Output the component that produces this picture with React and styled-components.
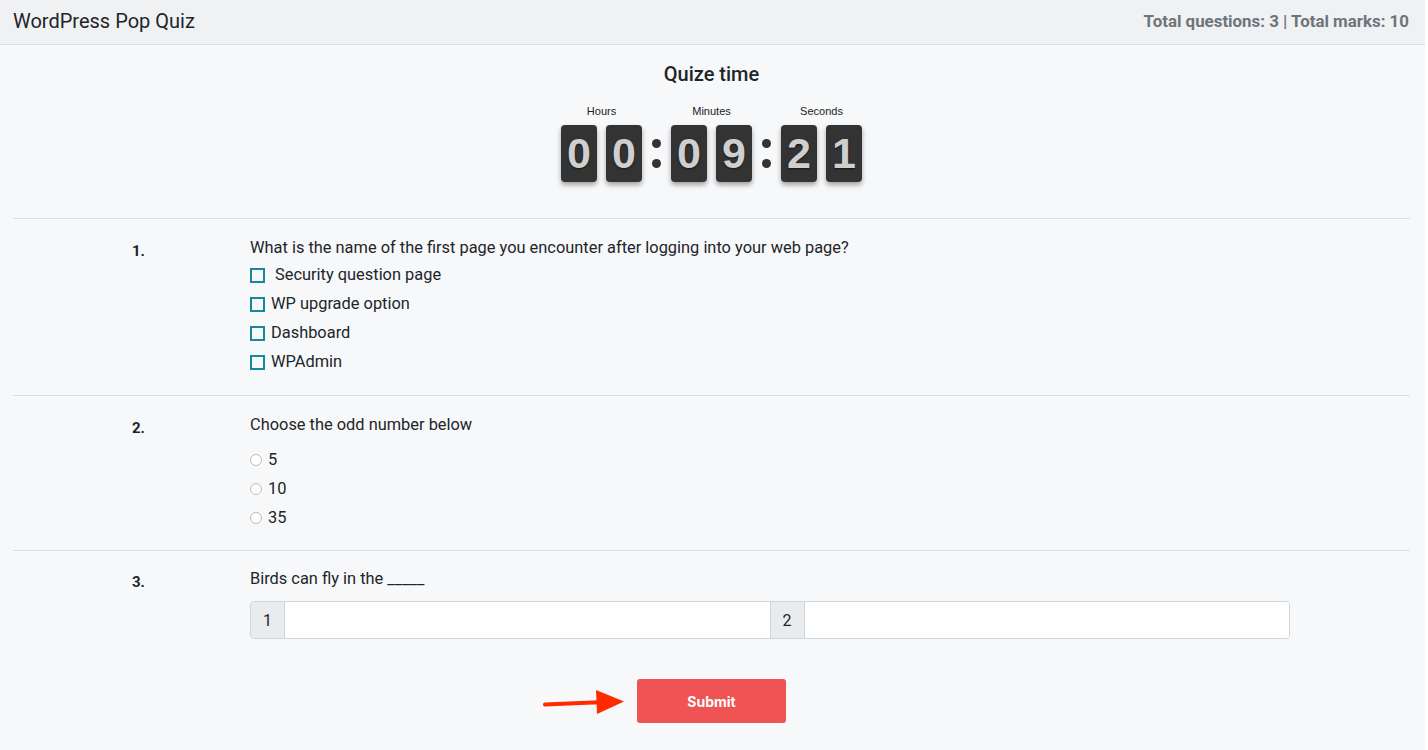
import React from 'react'
import styled, { createGlobalStyle } from 'styled-components'

const GlobalStyle = createGlobalStyle`
  html, body {
    margin: 0;
    padding: 0;
    background: #ffffff;
  }
  body {
    font-family: Roboto, Inter, "Noto Sans", "Liberation Sans", sans-serif;
    color: #212529;
  }
`

const Page = styled.div`
  width: 1425px;
  min-height: 750px;
  background: #f7f8fa;
`

const Header = styled.header`
  height: 45px;
  box-sizing: border-box;
  display: flex;
  align-items: center;
  justify-content: space-between;
  padding: 0 16px 2px 13px;
  background: #f0f1f3;
  border-bottom: 1px solid #dcdee1;
`

const Brand = styled.div`
  font-size: 20px;
  color: #212529;
`

const Totals = styled.div`
  font-size: 16.9px;
  font-weight: 700;
  color: #6c757d;
`

const Main = styled.main`
  padding: 0 15px 0 13px;
`

const TimerBlock = styled.section`
  display: flex;
  flex-direction: column;
  align-items: center;
  padding: 18px 0 36px;
  border-bottom: 1px solid #dcdee1;
`

const TimerTitle = styled.h2`
  margin: 0 0 19px;
  font-size: 20px;
  font-weight: 500;
  line-height: 22px;
  color: #212529;
`

const Clock = styled.div`
  display: flex;
  align-items: flex-end;
`

const Group = styled.div`
  display: flex;
  flex-direction: column;
  align-items: center;
`

const GroupLabel = styled.div`
  font-family: "Liberation Sans", Arial, sans-serif;
  font-size: 11px;
  line-height: 14px;
  color: #222;
  margin-bottom: 7px;
`

const Cards = styled.div`
  display: flex;
  gap: 9px;
`

const Card = styled.div`
  width: 36px;
  height: 57px;
  border-radius: 4px;
  background: #333333;
  display: flex;
  align-items: center;
  justify-content: center;
  box-shadow: 0 3px 5px rgba(0, 0, 0, 0.35);
  font-family: "Liberation Sans", Arial, sans-serif;
  font-weight: 700;
  font-size: 43px;
  color: #cfcfcf;
  text-shadow: 0 1px 2px rgba(0, 0, 0, 0.6);
`

const Colon = styled.div`
  width: 29px;
  height: 57px;
  display: flex;
  flex-direction: column;
  align-items: center;
  justify-content: center;
  gap: 11px;

  &::before,
  &::after {
    content: '';
    width: 9px;
    height: 9px;
    border-radius: 50%;
    background: #333;
  }
`

const Question = styled.section`
  display: grid;
  grid-template-columns: 237px 1040px;
  padding: ${(p) => p.$pad || '17px 0 18px'};
  border-bottom: ${(p) => (p.$last ? 'none' : '1px solid #dcdee1')};
`

const Number = styled.div`
  padding: 3px 0 0 119px;
  font-size: 15px;
  font-weight: 700;
  line-height: 24px;
  color: #212529;
`

const Body = styled.div`
  display: flex;
  flex-direction: column;
`

const Prompt = styled.div`
  font-size: 16.4px;
  line-height: 24px;
  color: #212529;
  margin-bottom: ${(p) => p.$gap || '0'};
`

const Option = styled.label`
  display: flex;
  align-items: center;
  height: 29px;
  font-size: 16.4px;
  color: #212529;
`

const Box = styled.span`
  width: 15px;
  height: 15px;
  box-sizing: border-box;
  border: 2px solid #17889a;
  margin-right: ${(p) => p.$space || '6px'};
  margin-top: 2px;
`

const Radio = styled.span`
  width: 12px;
  height: 12px;
  box-sizing: border-box;
  border: 1px solid #bdbdbd;
  border-radius: 50%;
  background: #fff;
  margin-right: 6px;
  margin-top: 1px;
`

const InputGroup = styled.div`
  display: flex;
  height: 38px;
  box-sizing: border-box;
  border: 1px solid #ced4da;
  border-radius: 4px;
  overflow: hidden;
  background: #fff;
`

const Addon = styled.span`
  width: 33px;
  display: flex;
  align-items: center;
  justify-content: center;
  background: #e9ecef;
  font-size: 16px;
  color: #212529;
  border-left: ${(p) => (p.$divided ? '1px solid #ced4da' : 'none')};
  border-right: 1px solid #ced4da;
`

const Field = styled.input`
  flex: 1;
  min-width: 0;
  border: none;
  outline: none;
  background: #fff;
  font-size: 16px;
  padding: 0 12px;
`

const Actions = styled.div`
  display: flex;
  justify-content: center;
  align-items: center;
  padding: 40px 0 20px;
`

const ArrowWrap = styled.div`
  width: 96px;
  height: 30px;
  margin-left: -96px;
`

const SubmitButton = styled.button`
  width: 149px;
  height: 44px;
  border: none;
  border-radius: 3px;
  background: #ef5353;
  color: #fff;
  font-family: Inter, Roboto, "Liberation Sans", sans-serif;
  font-weight: 700;
  font-size: 14px;
  cursor: pointer;
`

const Arrow = () => (
  <ArrowWrap>
    <svg width="96" height="30" viewBox="0 0 96 30">
      <path d="M4 18.5 L64 16" stroke="#ff2a00" strokeWidth="4" strokeLinecap="round" />
      <path d="M55 4 L83 15.5 L56 28 Z" fill="#ff2a00" />
    </svg>
  </ArrowWrap>
)

const TimeGroup = ({ label, digits }) => (
  <Group>
    <GroupLabel>{label}</GroupLabel>
    <Cards>
      {digits.split('').map((d, i) => (
        <Card key={i}>{d}</Card>
      ))}
    </Cards>
  </Group>
)

export default function App() {
  return (
    <>
      <GlobalStyle />
      <Page>
        <Header>
          <Brand>WordPress Pop Quiz</Brand>
          <Totals>Total questions: 3 | Total marks: 10</Totals>
        </Header>
        <Main>
          <TimerBlock>
            <TimerTitle>Quize time</TimerTitle>
            <Clock>
              <TimeGroup label="Hours" digits="00" />
              <Colon />
              <TimeGroup label="Minutes" digits="09" />
              <Colon />
              <TimeGroup label="Seconds" digits="21" />
            </Clock>
          </TimerBlock>

          <Question $pad="17px 0 19px">
            <Number>1.</Number>
            <Body>
              <Prompt>What is the name of the first page you encounter after logging into your web page?</Prompt>
              <Option><Box $space="10px" />Security question page</Option>
              <Option><Box />WP upgrade option</Option>
              <Option><Box />Dashboard</Option>
              <Option><Box />WPAdmin</Option>
            </Body>
          </Question>

          <Question>
            <Number>2.</Number>
            <Body>
              <Prompt $gap="8px">Choose the odd number below</Prompt>
              <Option><Radio />5</Option>
              <Option><Radio />10</Option>
              <Option><Radio />35</Option>
            </Body>
          </Question>

          <Question $last $pad="16px 0 0">
            <Number>3.</Number>
            <Body>
              <Prompt $gap="10px">Birds can fly in the _____</Prompt>
              <InputGroup>
                <Addon>1</Addon>
                <Field type="text" />
                <Addon $divided>2</Addon>
                <Field type="text" />
              </InputGroup>
            </Body>
          </Question>

          <Actions>
            <Arrow />
            <SubmitButton>Submit</SubmitButton>
          </Actions>
        </Main>
      </Page>
    </>
  )
}
